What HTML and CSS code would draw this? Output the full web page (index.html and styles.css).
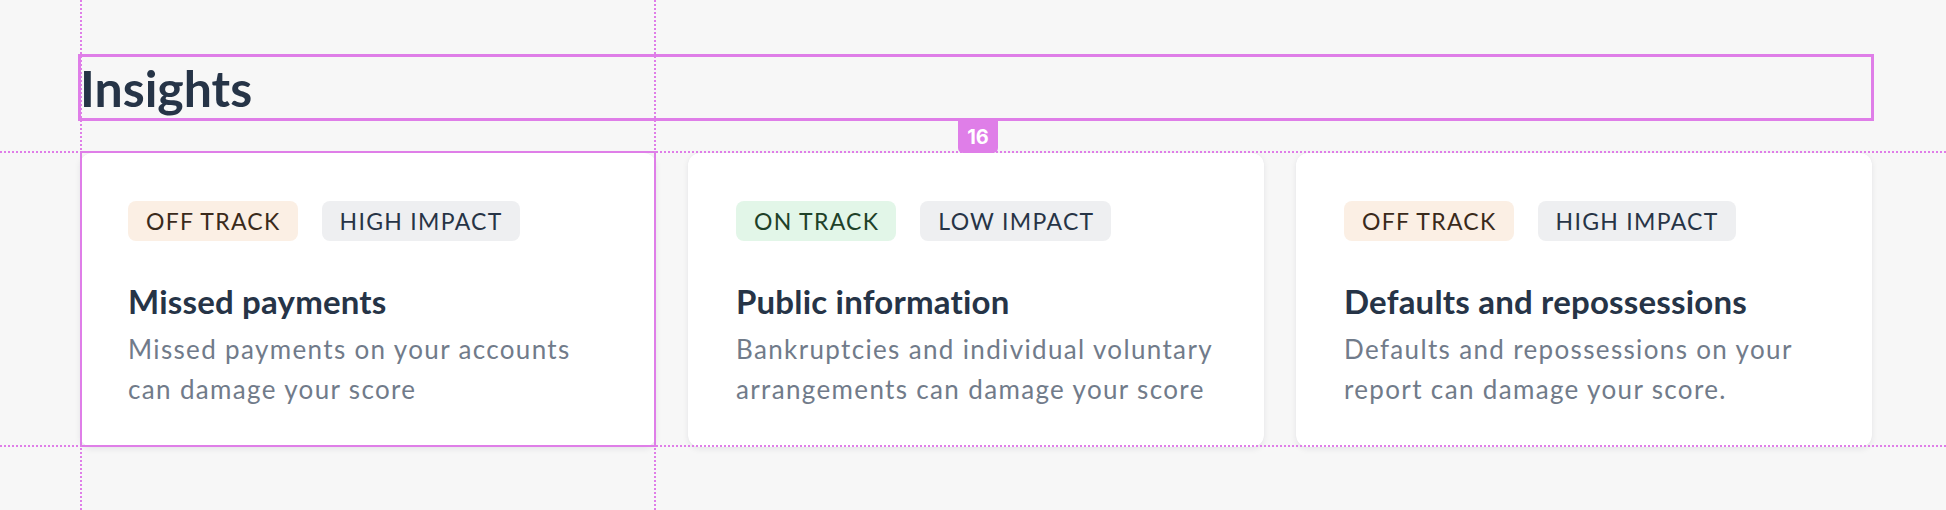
FILE: index.html
```html
<!DOCTYPE html>
<html lang="en">
<head>
<meta charset="utf-8">
<title>Insights</title>
<link rel="stylesheet" href="styles.css">
</head>
<body>
<div class="page">
  <section class="insights">
    <h2 class="insights-title">Insights</h2>
    <div class="cards">
      <article class="card">
        <div class="badges">
          <span class="badge badge-off">OFF TRACK</span>
          <span class="badge badge-impact">HIGH IMPACT</span>
        </div>
        <h3 class="card-title">Missed payments</h3>
        <p class="card-text">Missed payments on your accounts can damage your score</p>
      </article>
      <article class="card">
        <div class="badges">
          <span class="badge badge-on">ON TRACK</span>
          <span class="badge badge-impact">LOW IMPACT</span>
        </div>
        <h3 class="card-title">Public information</h3>
        <p class="card-text">Bankruptcies and individual voluntary arrangements can damage your score</p>
      </article>
      <article class="card">
        <div class="badges">
          <span class="badge badge-off">OFF TRACK</span>
          <span class="badge badge-impact">HIGH IMPACT</span>
        </div>
        <h3 class="card-title">Defaults and repossessions</h3>
        <p class="card-text">Defaults and repossessions on your report can damage your score.</p>
      </article>
    </div>
  </section>

  <div class="guide guide-v guide-v1"></div>
  <div class="guide guide-v guide-v2"></div>
  <div class="guide guide-h guide-h1"></div>
  <div class="guide guide-h guide-h2"></div>
  <div class="sel sel-heading"></div>
  <div class="sel sel-card"></div>
  <div class="spacing-label">16</div>
</div>
</body>
</html>
```

FILE: styles.css
```css
* { box-sizing: border-box; }

html, body {
  margin: 0;
  padding: 0;
  background: #f7f7f7;
}

body {
  font-family: Lato, "Open Sans", "Liberation Sans", sans-serif;
  color: #263447;
  overflow: hidden;
}

.page {
  position: relative;
  width: 1946px;
  height: 510px;
  padding: 56px 74px 0 80px;
}

.insights {
  width: 1792px;
}

.insights-title {
  margin: 0;
  height: 64px;
  font-size: 50px;
  line-height: 64px;
  font-weight: 700;
  color: #263447;
}

.cards {
  margin-top: 33px;
  display: grid;
  grid-template-columns: repeat(3, 1fr);
  gap: 32px;
}

.card {
  background: #ffffff;
  border-radius: 12px;
  box-shadow: 0 2px 6px rgba(20, 30, 50, 0.08), 0 0 1px rgba(20, 30, 50, 0.06);
  padding: 48px 48px 40px;
  height: 294px;
}

.badges {
  display: flex;
  gap: 24px;
}

.badge {
  display: inline-flex;
  align-items: center;
  height: 40px;
  padding: 0 17px 0 18px;
  border-radius: 8px;
  font-size: 23px;
  letter-spacing: 1.3px;
  font-weight: 400;
}

.badge-off { background: #fbefe4; color: #3a2a1b; }
.badge-on { background: #e2f6e8; color: #1e4128; }
.badge-impact { background: #eeeff1; color: #273446; }

.card-title {
  margin: 40px 0 0;
  font-size: 33px;
  line-height: 40px;
  font-weight: 700;
  letter-spacing: 0.2px;
  color: #263447;
}

.card-text {
  margin: 8px 0 0;
  font-size: 26px;
  line-height: 40px;
  letter-spacing: 1.35px;
  color: #717b8a;
}

/* design-tool overlay */
.guide {
  position: absolute;
  pointer-events: none;
}

.guide-v {
  top: 0;
  bottom: 0;
  width: 2px;
  background: repeating-linear-gradient(to bottom, #df7ee8 0 2px, transparent 2px 4px);
}
.guide-v1 { left: 80px; }
.guide-v2 { left: 654px; }

.guide-h {
  left: 0;
  right: 0;
  height: 2px;
  background: repeating-linear-gradient(to right, #df7ee8 0 2px, transparent 2px 4px);
}
.guide-h1 { top: 151px; }
.guide-h2 { top: 445px; }

.sel {
  position: absolute;
  pointer-events: none;
  border-style: solid;
  border-color: #df7ee8;
}

.sel-heading {
  left: 78px;
  top: 54px;
  width: 1796px;
  height: 67px;
  border-width: 3px;
}

.sel-card {
  left: 80px;
  top: 151px;
  width: 576px;
  height: 296px;
  border-width: 2px;
}

.spacing-label {
  position: absolute;
  left: 958px;
  top: 121px;
  width: 40px;
  height: 32px;
  background: #df7ee8;
  border-radius: 0 0 5px 5px;
  color: #ffffff;
  font-family: Inter, "Liberation Sans", sans-serif;
  font-weight: 700;
  font-size: 20px;
  line-height: 32px;
  text-align: center;
}
```
